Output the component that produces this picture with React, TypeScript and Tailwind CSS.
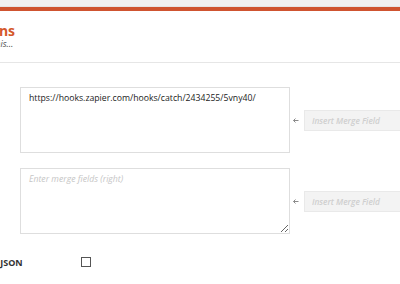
import React from 'react';

function MergeArrow() {
  return (
    <svg width="6" height="5" viewBox="0 0 6 5" className="shrink-0">
      <path d="M0.5 2.5 L5.5 2.5 M2.5 0.5 L0.5 2.5 L2.5 4.5" stroke="#8a8a8a" strokeWidth="1" fill="none" />
    </svg>
  );
}

function MergeField() {
  return (
    <div className="flex items-center gap-[5px] ml-[3px] shrink-0">
      <MergeArrow />
      <input
        type="text"
        placeholder="Insert Merge Field"
        className="w-[150px] h-[21px] pl-[7px] bg-[#f3f3f3] border border-[#e9e9e9] text-[8.3px] italic font-semibold outline-none placeholder:text-[#cfcfcf]"
      />
    </div>
  );
}

export default function App() {
  return (
    <div
      className="w-[400px] h-[284px] overflow-hidden bg-white"
      style={{ fontFamily: '"Open Sans", "Liberation Sans", sans-serif' }}
    >
      <div className="h-[7px] bg-[#f1f1f1] border-b border-[#e6e6e6]" />
      <div className="h-[4px] bg-[#cf5430]" />

      {/* Header */}
      <div className="border-b border-[#e6e6e6] pt-[12px] pb-[13px]">
        <div className="-ml-[37px]">
          <h2 className="text-[14px] leading-[16px] font-bold text-[#d4582b] whitespace-nowrap">Actions</h2>
          <p className="text-[9px] leading-[10px] italic text-[#555] whitespace-nowrap">Review this...</p>
        </div>
      </div>

      {/* Form */}
      <div className="-ml-[37px] pt-[24px] flex flex-col">
        <div className="flex items-center">
          <label className="w-[57px] shrink-0 text-[9px] font-bold text-[#333]">URL</label>
          <textarea
            defaultValue="https://hooks.zapier.com/hooks/catch/2434255/5vny40/"
            className="w-[270px] h-[66px] shrink-0 border border-[#dedede] pl-[8px] pt-[4px] text-[8.7px] leading-[12px] text-[#222] resize-none outline-none"
          />
          <MergeField />
        </div>

        <div className="flex items-center mt-[15px]">
          <label className="w-[57px] shrink-0 text-[9px] font-bold text-[#333]">Data</label>
          <textarea
            placeholder="Enter merge fields (right)"
            className="w-[270px] h-[66px] shrink-0 border border-[#dedede] pl-[8px] pt-[4px] text-[8.7px] leading-[12px] italic text-[#222] outline-none placeholder:text-[#c6c6c6]"
          />
          <MergeField />
        </div>

        <div className="flex items-center mt-[20px]">
          <label className="w-[118px] shrink-0 pt-[2px] text-[9px] font-bold text-[#333] whitespace-nowrap">Send As JSON</label>
          <input
            type="checkbox"
            className="appearance-none shrink-0 w-[10px] h-[10px] border border-[#555] bg-white"
          />
        </div>
      </div>
    </div>
  );
}
